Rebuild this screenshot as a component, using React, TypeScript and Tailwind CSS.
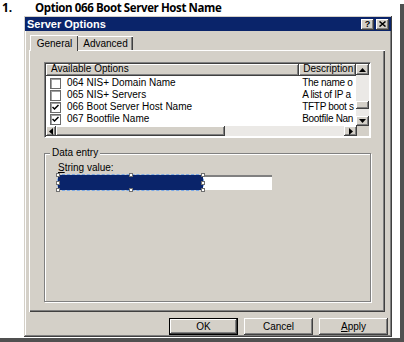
const raised =
  'bg-[#d4d0c8] shadow-[inset_-1px_-1px_0_#404040,inset_1px_1px_0_#ffffff,inset_-2px_-2px_0_#808080]'

const options = [
  { label: '064 NIS+ Domain Name', desc: 'The name o', checked: false },
  { label: '065 NIS+ Servers', desc: 'A list of IP a', checked: false },
  { label: '066 Boot Server Host Name', desc: 'TFTP boot s', checked: true },
  { label: '067 Bootfile Name', desc: 'Bootfile Nan', checked: true },
]

function Tri({ dir }: { dir: 'up' | 'down' | 'left' | 'right' }) {
  const pts = {
    up: '0,4 3.5,0 7,4',
    down: '0,0 7,0 3.5,4',
    left: '4,0 4,7 0,3.5',
    right: '0,0 4,3.5 0,7',
  }[dir]
  const vertical = dir === 'up' || dir === 'down'
  return (
    <svg width={vertical ? 7 : 4} height={vertical ? 4 : 7} viewBox={vertical ? '0 0 7 4' : '0 0 4 7'}>
      <polygon points={pts} fill="#000" />
    </svg>
  )
}

function CheckBox({ checked }: { checked: boolean }) {
  return (
    <div className="w-[11px] h-[11px] shrink-0 bg-white border border-[#6b6b6b] shadow-[inset_1px_1px_0_#a0a0a0] flex items-center justify-center">
      {checked && (
        <svg width="7" height="7" viewBox="0 0 7 7">
          <path d="M0.5 3 L2.5 5 L6.5 1" stroke="#000" strokeWidth="1.5" fill="none" />
        </svg>
      )}
    </div>
  )
}

function Handle({ x, y }: { x: number; y: number }) {
  return (
    <div
      className="absolute w-[4px] h-[4px] bg-white border border-[#707070]"
      style={{ left: x - 2, top: y - 2 }}
    />
  )
}

export default function App() {
  return (
    <div className="w-[404px] h-[342px] bg-white overflow-hidden flex flex-col font-['Liberation_Sans',Arial,sans-serif] text-black">
      <div className="flex h-[338px]">
        <div className="w-[400px] flex flex-col">
          {/* Heading */}
          <div className="h-[16px] flex items-center text-[12px] font-bold leading-none font-['Open_Sans','Liberation_Sans',sans-serif]">
            <span className="w-[35px] pl-[2px]">1.</span>
            <span className="text-[11.5px] tracking-[-0.4px]">Option 066 Boot Server Host Name</span>
          </div>

          {/* Dialog */}
          <div className="ml-[24px] w-[368px] h-[321px] bg-[#d4d0c8] p-[1px] shadow-[inset_-1px_-1px_0_#404040,inset_1px_1px_0_#d4d0c8,inset_-2px_-2px_0_#808080,inset_2px_2px_0_#ffffff] flex flex-col">
            <div className="h-[14px] bg-[#0a246a] flex items-center justify-between pl-[2px] pr-[2px]">
              <span className="text-white text-[11px] font-bold leading-none">Server Options</span>
              <div className="flex gap-[2px]">
                <div className={`${raised} w-[13px] h-[11px] flex items-center justify-center text-[9px] font-bold leading-none`}>?</div>
                <div className={`${raised} w-[13px] h-[11px] flex items-center justify-center`}>
                  <svg width="7" height="6" viewBox="0 0 7 6">
                    <path d="M0.5 0.5 L6.5 5.5 M6.5 0.5 L0.5 5.5" stroke="#000" strokeWidth="1.5" />
                  </svg>
                </div>
              </div>
            </div>

            {/* Tabs */}
            <div className="h-[19px] flex items-end pl-[5px]">
              <div className="w-[48px] h-[16px] -mb-[1px] relative z-10 bg-[#d4d0c8] border-t border-l border-white shadow-[inset_-1px_0_0_#404040] text-[10px] flex items-center justify-center leading-none">
                General
              </div>
              <div className="w-[55px] h-[14px] bg-[#d4d0c8] border-t border-white shadow-[inset_-1px_0_0_#404040,inset_-2px_0_0_#808080] text-[10px] flex items-center justify-center leading-none">
                Advanced
              </div>
            </div>

            {/* Tab panel */}
            <div className="mx-[4px] w-[356px] h-[262px] border-t border-l border-white shadow-[inset_-1px_-1px_0_#404040,inset_-2px_-2px_0_#808080] pt-[11px] pl-[14px]">
              {/* List view */}
              <div className="w-[327px] h-[76px] bg-white border border-t-[#808080] border-l-[#808080] border-r-white border-b-white shadow-[inset_1px_1px_0_#404040] p-[1px] flex flex-col text-[10px] leading-none">
                <div className="flex h-[64px]">
                  <div className="w-[311px] flex flex-col overflow-hidden">
                    <div className="flex h-[12px]">
                      <div className={`${raised} w-[254px] pl-[5px] pb-[2px] flex items-center`}>Available Options</div>
                      <div className={`${raised} w-[57px] pl-[4px] pb-[2px] flex items-center`}>Description</div>
                    </div>
                    <div className="pt-[1px] flex flex-col">
                      {options.map((o) => (
                        <div key={o.label} className="flex h-[12px] items-center">
                          <div className="w-[254px] flex items-center pl-[4px] gap-[6px]">
                            <CheckBox checked={o.checked} />
                            <span>{o.label}</span>
                          </div>
                          <div className="w-[57px] pl-[3px] whitespace-nowrap tracking-[-0.3px]">{o.desc}</div>
                        </div>
                      ))}
                    </div>
                  </div>
                  <div className="w-[13px] flex flex-col bg-[#ebe9e6]">
                    <div className={`${raised} h-[11px] flex items-center justify-center`}>
                      <Tri dir="up" />
                    </div>
                    <div className="h-[26px]" />
                    <div className={`${raised} h-[8px]`} />
                    <div className="h-[7px]" />
                    <div className={`${raised} h-[10px] flex items-center justify-center`}>
                      <Tri dir="down" />
                    </div>
                  </div>
                </div>
                <div className="flex h-[10px]">
                  <div className={`${raised} w-[10px] flex items-center justify-center`}>
                    <Tri dir="left" />
                  </div>
                  <div className={`${raised} w-[169px]`} />
                  <div className="w-[119px] bg-[#ebe9e6]" />
                  <div className={`${raised} w-[13px] flex items-center justify-center`}>
                    <Tri dir="right" />
                  </div>
                  <div className="w-[12px] bg-[#d4d0c8]" />
                </div>
              </div>

              {/* Data entry group */}
              <div className="relative mt-[15px] w-[327px] h-[149px] border border-[#808080] shadow-[1px_1px_0_#ffffff,inset_1px_1px_0_#ffffff] pl-[13px] pt-[9px] text-[10px] leading-none">
                <span className="absolute left-[5px] -top-[6px] bg-[#d4d0c8] px-[2px]">Data entry</span>
                <div className="h-[11px]">
                  <span className="underline">S</span>tring value:
                </div>
                <div className="relative mt-[1px] w-[214px] h-[15px] bg-white shadow-[inset_0_2px_0_#808080,inset_1px_0_0_#808080,inset_-1px_-1px_0_#ffffff]">
                  <div className="absolute left-0 top-0 w-[145px] h-[15px] bg-[#0a246a] outline outline-1 outline-dashed outline-[#7aa8e6]" />
                  <Handle x={0} y={0} />
                  <Handle x={73} y={0} />
                  <Handle x={145} y={0} />
                  <Handle x={0} y={8} />
                  <Handle x={145} y={8} />
                  <Handle x={0} y={15} />
                  <Handle x={73} y={15} />
                  <Handle x={145} y={15} />
                </div>
              </div>
            </div>

            {/* Buttons */}
            <div className="flex justify-end gap-[6px] pr-[3px] pt-[6px] text-[10px] leading-none">
              <div className="w-[69px] h-[17px] bg-[#d4d0c8] border border-black shadow-[inset_-1px_-1px_0_#404040,inset_1px_1px_0_#ffffff,inset_-2px_-2px_0_#808080] flex items-center justify-center">OK</div>
              <div className={`${raised} w-[69px] h-[17px] flex items-center justify-center`}>Cancel</div>
              <div className={`${raised} w-[69px] h-[17px] flex items-center justify-center`}>
                <span><span className="underline">A</span>pply</span>
              </div>
            </div>
          </div>
        </div>
        <div className="w-[4px] mt-[4px] bg-[#505050]" />
      </div>
      <div className="h-[4px] bg-[#505050]" />
    </div>
  )
}
